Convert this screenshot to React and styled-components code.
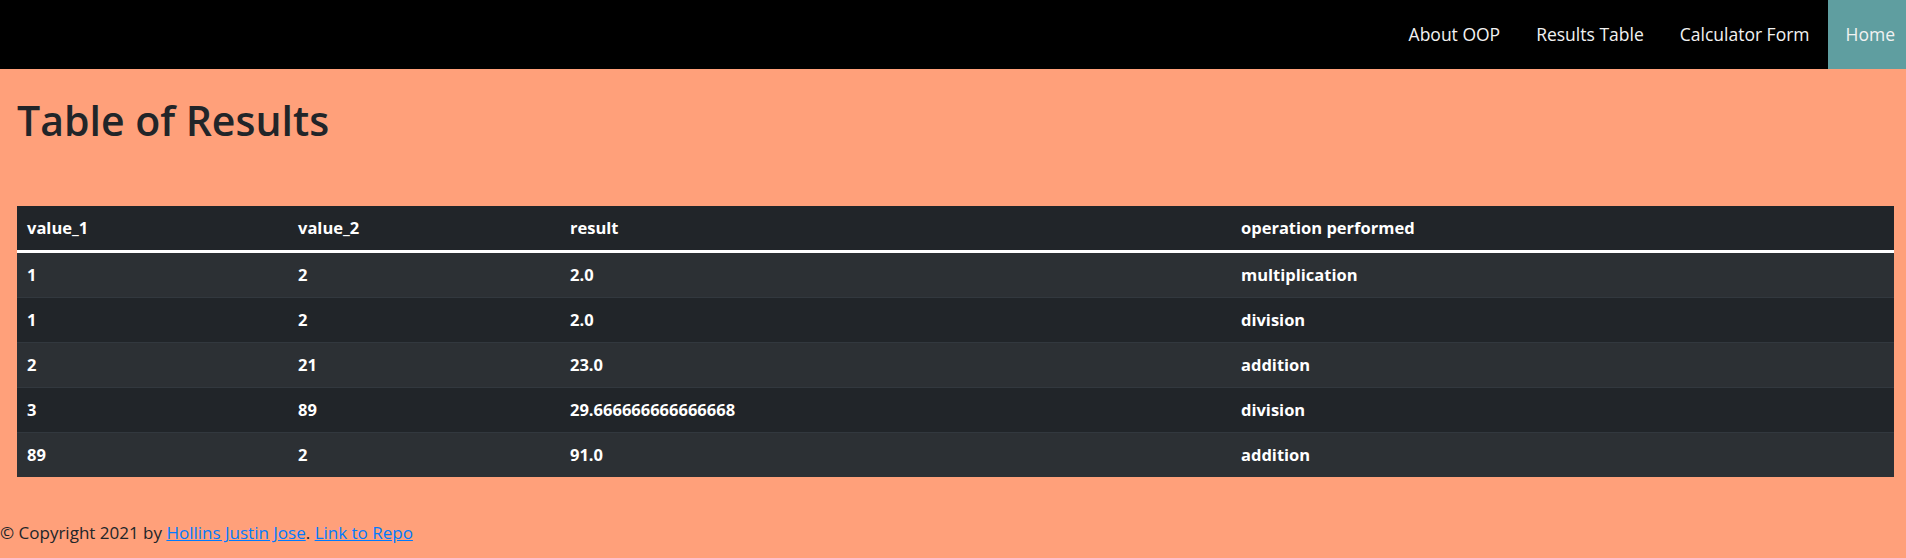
import React from "react";
import styled, { createGlobalStyle } from "styled-components";

const Global = createGlobalStyle`
  html, body {
    margin: 0;
    padding: 0;
    background: #ffa07a;
  }
  body {
    font-family: "Open Sans", "Noto Sans", sans-serif;
    color: #212529;
    font-size: 16px;
  }
`;

const NavBar = styled.nav`
  height: 69px;
  background: #000;
  display: flex;
  justify-content: flex-end;
  align-items: stretch;
  overflow: hidden;
`;

const NavLink = styled.a`
  display: flex;
  align-items: center;
  padding: 0 ${(p) => (p.$last ? "11px" : "18px")} 2px 18px;
  color: #f2f2f2;
  font-size: 17.5px;
  text-decoration: none;
  background: ${(p) => (p.$active ? "#5f9ea0" : "transparent")};
`;

const Main = styled.main`
  padding: 0 12px 0 17px;
`;

const Title = styled.h1`
  margin: 0;
  padding: 26px 0 0 0;
  font-size: 41px;
  font-weight: 600;
  line-height: 50px;
  color: #212529;
`;

const Table = styled.table`
  margin-top: 61px;
  width: 100%;
  border-collapse: collapse;
  background: #212529;
  color: #fff;
  font-weight: 700;
  font-size: 16.5px;
`;

const HeadCell = styled.th`
  text-align: left;
  padding: 10px 10px;
  line-height: 24px;
  border-bottom: 3px solid #fff;
  font-weight: 700;
`;

const Row = styled.tr`
  background: ${(p) => (p.$striped ? "#2c3034" : "#212529")};
  &:not(:first-child) > td {
    border-top: 1px solid #32383e;
  }
`;

const Cell = styled.td`
  padding: 10px 10px;
  line-height: 24px;
`;

const Footer = styled.footer`
  padding: 44px 0 12px;
  font-size: 17px;
  color: #212529;
  line-height: 24px;
`;

const Link = styled.a`
  color: #007bff;
  text-decoration: underline;
`;

const rows = [
  ["1", "2", "2.0", "multiplication"],
  ["1", "2", "2.0", "division"],
  ["2", "21", "23.0", "addition"],
  ["3", "89", "29.666666666666668", "division"],
  ["89", "2", "91.0", "addition"],
];

export default function App() {
  return (
    <>
      <Global />
      <NavBar>
        <NavLink href="#">About OOP</NavLink>
        <NavLink href="#">Results Table</NavLink>
        <NavLink href="#">Calculator Form</NavLink>
        <NavLink href="#" $active $last>
          Home
        </NavLink>
      </NavBar>
      <Main>
        <Title>Table of Results</Title>
        <Table>
          <colgroup>
            <col style={{ width: 271 }} />
            <col style={{ width: 272 }} />
            <col style={{ width: 671 }} />
            <col />
          </colgroup>
          <thead>
            <tr>
              <HeadCell>value_1</HeadCell>
              <HeadCell>value_2</HeadCell>
              <HeadCell>result</HeadCell>
              <HeadCell>operation performed</HeadCell>
            </tr>
          </thead>
          <tbody>
            {rows.map((r, i) => (
              <Row key={i} $striped={i % 2 === 0}>
                {r.map((c, j) => (
                  <Cell key={j}>{c}</Cell>
                ))}
              </Row>
            ))}
          </tbody>
        </Table>
      </Main>
      <Footer>
        © Copyright 2021 by <Link href="#">Hollins Justin Jose</Link>.{" "}
        <Link href="#">Link to Repo</Link>
      </Footer>
    </>
  );
}
